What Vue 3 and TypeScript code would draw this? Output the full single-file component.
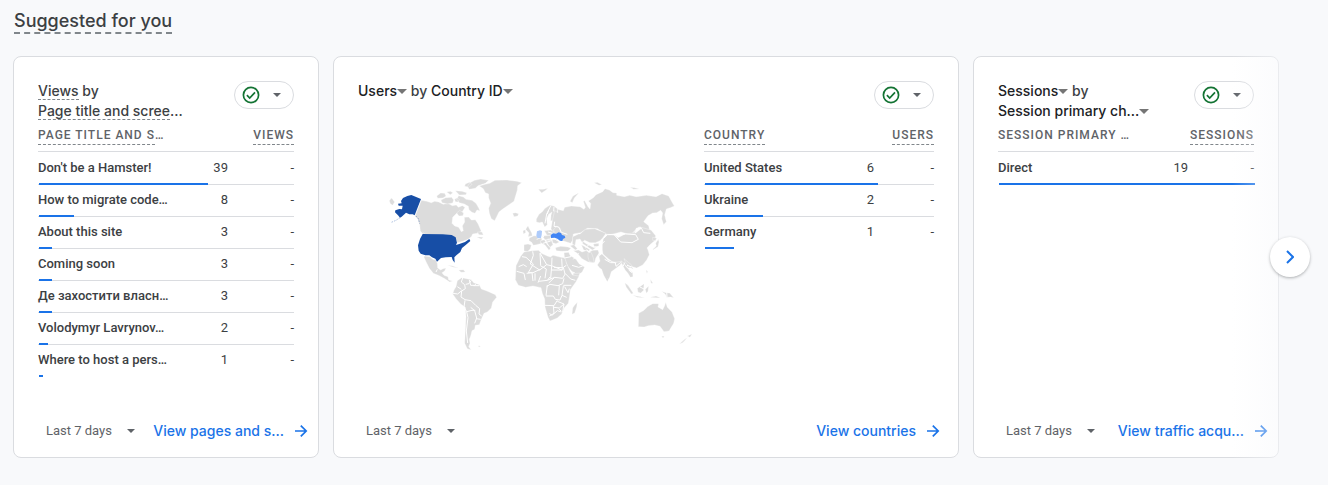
<script setup lang="ts">
interface Row {
  name: string
  value: number
}

interface Label {
  text: string
  cut?: boolean
  hint?: boolean
  menu?: boolean
}

interface Card {
  id: string
  metric: Label
  dimension: Label
  wide: boolean
  head: Label
  measure: string
  total: number
  rows: Row[]
  link: string
}

const cards: Card[] = [
  {
    id: 'pages',
    metric: { text: 'Views', hint: true },
    dimension: { text: 'Page title and scree', cut: true, hint: true },
    wide: false,
    head: { text: 'Page title and s', cut: true, hint: true },
    measure: 'Views',
    total: 59,
    rows: [
      { name: "Don't be a Hamster!", value: 39 },
      { name: 'How to migrate code…', value: 8 },
      { name: 'About this site', value: 3 },
      { name: 'Coming soon', value: 3 },
      { name: 'Де захостити власн…', value: 3 },
      { name: 'Volodymyr Lavrynov…', value: 2 },
      { name: 'Where to host a pers…', value: 1 },
    ],
    link: 'View pages and s…',
  },
  {
    id: 'countries',
    metric: { text: 'Users', menu: true },
    dimension: { text: 'Country ID', menu: true },
    wide: true,
    head: { text: 'Country', hint: true },
    measure: 'Users',
    total: 8,
    rows: [
      { name: 'United States', value: 6 },
      { name: 'Ukraine', value: 2 },
      { name: 'Germany', value: 1 },
    ],
    link: 'View countries',
  },
  {
    id: 'traffic',
    metric: { text: 'Sessions', menu: true },
    dimension: { text: 'Session primary ch…', menu: true },
    wide: false,
    head: { text: 'Session primary …' },
    measure: 'Sessions',
    total: 19,
    rows: [{ name: 'Direct', value: 19 }],
    link: 'View traffic acqu…',
  },
]

const share = (row: Row, card: Card): string => `${(row.value / card.total) * 100}%`
</script>

<template>
  <main class="page">
    <h1 class="heading"><span>Suggested for you</span></h1>

    <div class="carousel">
      <section v-for="card in cards" :key="card.id" class="card" :class="{ wide: card.wide }">
        <header class="top">
          <h2 class="title">
            <template v-for="(part, i) in [card.metric, card.dimension]" :key="i">
              <button v-if="part.menu" type="button" class="pick">
                <span>{{ part.text }}</span>
                <svg class="pick-caret" viewBox="0 0 10 5" aria-hidden="true"><path d="M0 0h10L5 5z" /></svg>
              </button>
              <span v-else class="plain"><span :class="{ hint: part.hint }">{{ part.text }}</span><span v-if="part.cut">…</span></span>
              <template v-if="i === 0">{{ ' by ' }}<br v-if="!card.wide" /></template>
            </template>
          </h2>
          <button type="button" class="status" aria-label="Data quality">
            <svg class="check" viewBox="0 0 18 18" aria-hidden="true">
              <circle cx="9" cy="9" r="7.6" />
              <path d="M4.9 9.2l2.8 2.8 5.3-5.6" />
            </svg>
            <svg class="caret" viewBox="0 0 8 4" aria-hidden="true"><path d="M0 0h8L4 4z" /></svg>
          </button>
        </header>

        <div class="body">
          <svg v-if="card.wide" class="map" viewBox="-36 0 1038 570" role="img" aria-label="Users by country">
            <g class="land">
              <path d="M154 91l16 3 14 4 10-4 12 2 14 7 14-3 13 7 12-2 6 7 12-5 8 5-8 13-17 5-12 12-2 18 8 8 12 4 8 13 6-3-3-14 7-12-1-14 13-1 8 9 12-1 8 12 10 23-12 6-14 2-4 8-10 8-16 6-16 4-6-14-12-6-44-3-41-3-8-9-2-18-6-18-8-8z" />
              <path d="M200 78l12-9 12 1 4 8-9 6-16 1zM213 90l14-7 18-1 6 8-3 9-16 3-16-4zM230 66l11-2 8 4-8 6zM254 88l8-5 6 6-4 7-8-1zM266 77l14 4 8 7 18 3 12 9 7 12 5 10-9-2-6 10-9-3-9-8-2-10-12-7-15-4-8-10zM256 62l20 2 14 4-2 6-20 1zM286 42l12-5 8 6-9 9-13-3zM300 38l14-7 18-4 24 4-10 9-22 7-8 8-18 3-6-8zM260 129l9-8 12 8-2 8-12 1zM322 186l14 0 4 9-13-1zM320 202l8-1 12 1-6 5z" />
              <path d="M340 56l-12-8 17-5 14-3 16-9 36-1 30 4 14 4-12 9-1 13-6 20-4 14-15 10-20 14-10 8-7 14-6 12-10-6-6-16-2-15 6-15-6-16v-12l-10-4z" />
              <path d="M428 130l8-2 10 3-3 7-11 2zM58 92l6-8 4 4 6 8-6 10-7-5zM34 291l4 2M158 186l8 8" />
              <path d="M163 258l17 2 8 8 9 2 5 10 1 14 9 6 7-4 9-2-4 9-8 5 6 8 12 4 2 10 12 3-9 3-13-9-18-10-18-7-12-15-10-20-6-13z" />
              <path d="M232 286l14 1 20 7-15-2zM266 300l14-1 6 7-13 1zM292 305l5 0" />
              <path d="M262 332l13-9 15 3 14 3 7 9 17 6 6 13 17 6 25 11 4 8-12 14-4 18-12 12-10 4-8 18-6 16-12 2-2 12-8 4-4 16-4 10 2 12-4 10 8 10-12-4-8-16 2-40 2-40-2-28-14-10-14-16-10-14 4-12 6-10z" />
              <path d="M324 527l8 1-5 4z" />
              <path d="M467 178l7-11 4 9 7 12 2 9-13 3 3-11zM459 182l7-3 1 9-7 4zM478 204l14-7 12 2 12 7-4 15-13 3-9 2-5-9-8-5zM462 224l12-2 10 3-3 11-8 9-11-2z" />
              <path d="M499 147l8-14 10-8 8-10 14-9 13 2 10 8-1 16 1 14-9 6-11 0 1-16 3-10-10 7-6 13 2 18-8 7-7-15-9 2-9-2z" />
              <path d="M505 58l14 0 15-3-7 6-12 8zM600 94l9-16 18-10-14 16-6 14zM672 38l10-1 14 7-9 2zM780 52l14 1 14 4-17 1z" />
              <path d="M554 122l10 6-2-10 18 4 4-10 20-4 26 2 12 8 4-6-6-18 4-2 10 18 6 7 2-17-7-7 15-10 8-9 20-9 7-9 13 4 11 8 11 1 0 7 23 4 16-4 20 4 30-4 29 4 18-9 20 7 12 22 5 8-12 5-12 4-5 18 5 20-8 9-6-18 3-17-6-8-12 7-12 1-14 8-13 18 15 12 4 20-2 16-7 4 2-15-14-18-20 0-6 18-20 0-20-6-20 5-20 4-31-19-30-1-20 13-22 4-2 18-6 10-24-8-10-8-17-10-8-18 4-24z" />
              <path d="M523 182l18-2 10 4-4 11-15 2zM517 198l20-2 12 4-8 10-16-1zM511 212l12-3 9 15 10 10-5 7-12-16-13-7zM528 210l16 1 5 13-9 8-8-12zM546 208l14 0 8 8-10 5-10-3zM550 180l10-12 12 8-1 15-15 0zM556 233l16-4 22 2 9 4-9 8-19 1-16-2z" />
              <path d="M608 200l18-8 4 0 16-14 28-2 34 14-10 14-8 8-14 6-16 0-16-7-8 6-6-10-12 2-3 18-8-4z" />
              <path d="M600 227l12-3 10 12-6 4zM610 242l16-2 10 6 12-4 16 6 6 16 2 15-18-3-18-10-14-16zM634 224l14 8 12 7-4 4-15-3zM638 214l12 8 16 8 10 5-9 5-17-11-12-8zM654 248l14-7 16-1 3 9-10 16-3 13-16-3-4-14zM670 222l16-2 1 8-14 5z" />
              <path d="M700 206l12-11 22 0 10 8 23-12 30-2 20-16 26 7 14 17-4 16-14 12-8 9 3 6 4 14-8 16-12 15-18 9-10-3-15 3-10-10-18-6-20-3-12-9-16-14-2-12 0-16z" />
              <path d="M686 256l10-4 10 10 8 9 20 7 12-3 10-2-5 12-11 8-16 12-5 17-7 13-11-19-6-18-6-4-7-9 8-12z" />
              <path d="M752 274l9 4 7 12 8 8 12 10 1 12-8 2-7-12-8-9-8-15zM762 266l14 12 8 6 6 14-10-6-14-16z" />
              <path d="M582 248l14-1 4 9 18 12 10 14 16 9-8 16-20 12-9-13-13-16-10-22z" />
              <path d="M606 316l6-5 18-2-5 13z" />
              <path d="M438 287l14-28 10-13 24-4 20-1 8 9 18 8 9 3 8-5 24 6 12 2 4 15 10 22 8 14 20 3-9 17-17 24-2 18-4 23-12 13-8 19-13 12-22 9-6-11-9-31-1-24-7-17-4-17-24-5-22 4-22-6-9-17z" />
              <path d="M608 414l6-9 8-8-2 14-6 18-8 4z" />
              <path d="M716 330l-3-5M764 338l10 8 16 24-6 2-15-20zM788 376l24 4 12 4-22-2zM802 355l12-8 8-6-1 20-9 8-8-2zM826 358l10-10-2 16-5 6zM828 300l5 4-2 8zM841 328l4 6 4 6-6 0zM875 364l12 4 12 1 12 14-9-2-12 1-4-9z" />
              <path d="M846 240l8-4 10-6 3-14-2-8-8 12 2 8zM848 202l12 2-4 8-8-1z" />
              <path d="M806 430l16-9 12-12 14-8 18 0-2 10 14 8 6-12 3-10 5 15 14 14 8 20-3 14-14 23-15 2-12-16-16-4-19 2-12 4-18-1z" />
              <path d="M875 498l8 1-4 6zM952 498l14-6-6 10zM928 522l16-14 8-5-14 15zM840 382l18-4 13 5M942 404l9 4" />
              <path d="M662 518l4 1" />
            </g>
            <g class="edges">
              <path d="M278 324l-4 12 10 8 2 12-11 7-2 18 12 8 18 3 14 14 12 10-2 16 8 6M287 343l10-2 7-10M298 330l4 16 12 0 4-5M310 347l18 0M249 370l14 2 12-10M285 391l-3 20 8 14 16-4 10 0M302 412l12 10 6 22-6 16M290 425l4 18-5 40 4 36M318 446l14 2M262 350l12 8M202 298l-4 8M220 310l8-8" />
              <path d="M456 260l12 2 22 20-14 24M490 256l-9 26 28 18 21-16-20-35M488 244l2 12M510 250l2 36M511 298l-22 10-15 0M530 284l16 4M511 287l18 10-4 28M546 263l-1 24 31 13M575 266l2 34-33 0M545 288l-3 38M552 292l28 1M580 292l5 20M580 292l9-6M446 290l14-6 10 6M440 304l22 6M462 310l4 20M470 310l16-2M486 308l3 25M495 310l0 22M512 318l-8 20M506 334l26-3 8-10M532 331l22-9 24 3M554 322l-18 17M578 325l8-14 16 16 14 4M530 350l10-7 24 4 14-6 4-16M580 346l24 0M528 378l22 0 6 10 14 2 6-14 14 6M532 345l-4 32M568 346l-2 30M580 348l-4 28M524 406l28 1 10-16M550 408l2 22-14 8M562 394l20 8-14 12-16-2M582 402l-4 24M538 430l8 6 16-14 12 4M566 416l8 8M584 350l10 18 4-12" />
              <path d="M542 108l-12 24-5 28M552 110l-1 14M536 120l-4 12" />
              <path d="M554 155l-2 14 14 2 8 16 18 6M534 186l20 6M532 208l20-2 14 8M500 208l22-9M544 195l-2 12M519 220l23-7" />
              <path d="M700 206l12-13 20 1 20 22 34 2 19-10-8-14-30-2-28 4M789 188l16-16 8 0 8 16 20 2M682 232l22-18M646 234l15-14 12 10 18 2M658 248l-8-10M674 280l8-16 13-14M704 268l18 10 14 0M736 278l2 11 14-12M610 268l16-18M606 286l20 6 12-4M583 264l20-4 2-14M614 308l-12-3M764 278l-4 10M771 286l18 6M776 300l10 8" />
              <path d="M890 363l1 20M810 351l12 6" />
            </g>
            <g class="first">
              <path d="M124 75l29 12-19 49-6-3-10 0-10-5-13 12-5 3-6-7-9-9 1-6 12-4 8 1 2-11-12 0-2-6 11-1-2-7 6-9 13-6z" />
              <path d="M158 192l60 1 27 2 12 7 4 16-3 7 12-4 15-5 13-9 3 6-13 11-12 10-5 12-12 10-6 6 1 16-6-8-3-9-18 1-14 2-12 11-5-9-10-4-8-6-12 0-14-5-6-9-2-16 6-19z" />
              <path class="chain" d="M90 143l-12 8-14 6M138 138l7 8 4 15" />
            </g>
            <path class="second" d="M542 196l7-6 9 1 8-4 7 2 3 6 8 2 2 6-7 4-2 6-7-1-8-6-8-3-11 1z" />
            <path class="third" d="M501 184l9-3 6 2-1 12-2 9-10 1-4-8z" />
          </svg>

          <table class="data">
            <colgroup>
              <col />
              <col class="value-col" />
              <col class="change-col" />
            </colgroup>
            <thead>
              <tr>
                <th scope="col"><span :class="{ hint: card.head.hint }">{{ card.head.text }}</span><span v-if="card.head.cut">…</span></th>
                <th scope="col" colspan="2" class="num"><span class="hint">{{ card.measure }}</span></th>
              </tr>
            </thead>
            <tbody>
              <tr v-for="row in card.rows" :key="row.name">
                <th scope="row">{{ row.name }}<span class="bar" :style="{ width: share(row, card) }"></span></th>
                <td class="num">{{ row.value }}</td>
                <td class="num">-</td>
              </tr>
            </tbody>
          </table>
        </div>

        <footer class="foot">
          <button type="button" class="range">
            Last 7 days
            <svg class="caret" viewBox="0 0 8 4" aria-hidden="true"><path d="M0 0h8L4 4z" /></svg>
          </button>
          <a class="more" href="#">
            <span>{{ card.link }}</span>
            <svg class="arrow" viewBox="0 0 14 14" aria-hidden="true"><path d="M1 7h11M6.8 1.6L12.2 7l-5.4 5.4" /></svg>
          </a>
        </footer>
      </section>

      <div class="fade"></div>
      <button type="button" class="next" aria-label="Next">
        <svg viewBox="0 0 8 14" aria-hidden="true"><path d="M1 1l6 6-6 6" /></svg>
      </button>
    </div>
  </main>
</template>

<style>
body {
  background: #f8f9fb;
}
</style>

<style scoped>
.page {
  padding: 10px 0 27px;
  color: #3c4043;
  font-family: Roboto, "Noto Sans", sans-serif;
  font-size: 13px;
}

.page * {
  box-sizing: border-box;
}

button {
  margin: 0;
  padding: 0;
  border: 0;
  background: none;
  color: inherit;
  font: inherit;
  cursor: pointer;
}

.heading {
  display: flex;
  margin: 0 14px 22px;
  font: 500 18px/22px Inter, sans-serif;
}

.heading span {
  border-bottom: 2px dashed #80868b;
}

.carousel {
  position: relative;
  display: grid;
  grid-template-columns: 306fr 626fr 306fr;
  gap: 14px;
  padding: 0 49px 0 13px;
}

.card {
  display: flex;
  flex-direction: column;
  min-width: 0;
  padding-top: 24px;
  border: 1px solid #dadce0;
  border-radius: 8px;
  background: #fff;
}

.top {
  display: flex;
  justify-content: space-between;
  align-items: flex-start;
  height: 40px;
  padding: 0 24px;
}

.title {
  margin: 0;
  font: 500 14px/20px Inter, sans-serif;
  white-space: nowrap;
}

.hint {
  border-bottom: 1px dashed #80868b;
}

.pick {
  color: #202124;
}

.pick-caret {
  width: 10px;
  height: 5px;
  margin-bottom: 2px;
  fill: #757575;
}

.status {
  display: flex;
  align-items: center;
  justify-content: space-between;
  width: 60px;
  height: 28px;
  padding: 0 12px 0 7px;
  border: 1px solid #dadce0;
  border-radius: 14px;
}

.check {
  width: 18px;
  height: 18px;
  fill: none;
  stroke: #137333;
  stroke-width: 1.7;
}

.caret {
  width: 8px;
  height: 4px;
  fill: #5f6368;
}

.body {
  display: grid;
  grid-template-columns: minmax(0, 1fr);
  align-items: start;
  padding: 0 24px;
}

.wide .body {
  grid-template-columns: 346fr 230fr;
}

.map {
  display: block;
  width: 100%;
  margin-top: 49px;
}

.land {
  fill: #dcdcdc;
  stroke: #fff;
  stroke-width: 1;
  stroke-linejoin: round;
}

.edges {
  fill: none;
  stroke: #fff;
  stroke-width: 3;
  stroke-linejoin: round;
}

.first {
  fill: #174ea6;
}

.first .chain {
  fill: none;
  stroke: #174ea6;
  stroke-width: 1;
  stroke-dasharray: 5 3;
}

.second {
  fill: #4285f4;
}

.third {
  fill: #aecbfa;
}

.data {
  width: 100%;
  border-collapse: separate;
  border-spacing: 0;
  table-layout: fixed;
}

.value-col,
.change-col {
  width: 66px;
}

.wide .value-col,
.wide .change-col {
  width: 60px;
}

.data th,
.data td {
  padding: 0;
  font-weight: 400;
  text-align: left;
  white-space: nowrap;
}

.data thead th {
  height: 31px;
  padding-bottom: 2px;
  border-bottom: 1px solid #dadce0;
  color: #5f6368;
  font-size: 12px;
  font-weight: 500;
  letter-spacing: 1px;
  line-height: 16px;
  text-transform: uppercase;
}

.data thead .hint {
  padding-bottom: 2px;
}

.data tbody tr {
  position: relative;
}

.data tbody th,
.data tbody td {
  height: 32px;
  padding-bottom: 2px;
  border-bottom: 1px solid #dadce0;
  line-height: 20px;
}

.data tbody th {
  font-weight: 500;
}

.data tbody tr:first-child > * {
  height: 33px;
  padding-bottom: 0;
}

.data tbody tr:last-child > * {
  border-bottom-color: transparent;
}

.data .num {
  text-align: right;
}

.bar {
  position: absolute;
  bottom: 0;
  left: 1px;
  height: 2px;
  background: #1a73e8;
}

.foot {
  display: flex;
  align-items: center;
  justify-content: space-between;
  margin-top: auto;
  padding: 42px 10px 14px 32px;
  line-height: 24px;
  white-space: nowrap;
}

.wide .foot {
  padding-right: 18px;
}

.range {
  display: flex;
  align-items: center;
  gap: 15px;
  color: #5f6368;
}

.more {
  display: flex;
  align-items: center;
  gap: 10px;
  color: #1a73e8;
  font: 500 14px/24px Inter, sans-serif;
  text-decoration: none;
}

.arrow {
  width: 14px;
  height: 14px;
  fill: none;
  stroke: currentColor;
  stroke-width: 1.7;
}

.fade {
  position: absolute;
  top: 0;
  right: 0;
  bottom: 0;
  width: 96px;
  background: linear-gradient(to right, rgba(248, 249, 251, 0), #f8f9fb 90%);
  pointer-events: none;
}

.next {
  position: absolute;
  top: calc(50% - 20px);
  right: 18px;
  display: grid;
  place-items: center;
  width: 40px;
  height: 40px;
  border-radius: 50%;
  background: #fff;
  box-shadow: 0 1px 3px rgba(60, 64, 67, 0.4);
}

.next svg {
  width: 8px;
  height: 14px;
  fill: none;
  stroke: #1a73e8;
  stroke-width: 2;
}
</style>
